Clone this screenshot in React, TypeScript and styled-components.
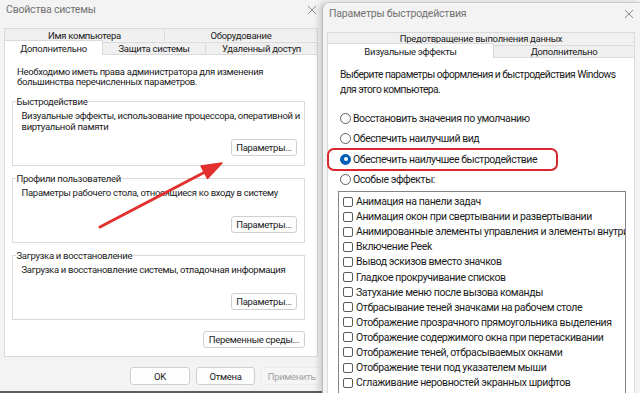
import React from 'react';
import styled, { createGlobalStyle } from 'styled-components';

const GlobalStyle = createGlobalStyle`
  html, body {
    margin: 0;
    padding: 0;
  }
  body {
    width: 640px;
    height: 393px;
    overflow: hidden;
    font-family: Roboto, 'Noto Sans', Arial, sans-serif;
    color: #1b1b1b;
    background: #f3f3f3;
  }
  * {
    box-sizing: border-box;
  }
`;

const Desktop = styled.div`
  position: relative;
  display: flex;
  width: 640px;
  height: 393px;
  overflow: hidden;
  background: #f3f3f3;
`;

const SystemWindow = styled.section`
  display: flex;
  flex-direction: column;
  flex: 0 0 322px;
  height: 393px;
  overflow: hidden;
  background: #f3f3f3;
`;

const PerfWindow = styled.section`
  position: relative;
  z-index: 1;
  display: flex;
  flex-direction: column;
  flex: 1;
  height: 391px;
  margin-top: 2px;
  overflow: hidden;
  background: #f3f3f3;
  border-left: 1px solid #b9b9b9;
  border-top: 1px solid #cdcdcd;
  border-top-left-radius: 7px;
  box-shadow: -3px 0 6px rgba(0, 0, 0, 0.16);
`;

const TitleBar = styled.header<{ $h: number; $pr: number }>`
  display: flex;
  align-items: center;
  justify-content: space-between;
  flex-shrink: 0;
  height: ${(p) => p.$h}px;
  padding: 0 ${(p) => p.$pr}px 8px 6px;
`;

const Title = styled.span`
  font-size: 10.5px;
  letter-spacing: -0.2px;
  line-height: 14px;
  color: #727272;
`;

const TabRow = styled.div<{ $h: number; $mr: number }>`
  display: flex;
  align-items: flex-end;
  flex-shrink: 0;
  height: ${(p) => p.$h}px;
  margin: 0 ${(p) => p.$mr}px 0 4px;
`;

const Tab = styled.div<{ $w?: number; $active?: boolean; $short?: boolean }>`
  position: relative;
  z-index: ${(p) => (p.$active ? 2 : 1)};
  display: flex;
  align-items: center;
  justify-content: center;
  flex: ${(p) => (p.$w ? `0 0 ${p.$w}px` : '1 1 0')};
  height: ${(p) => (p.$active ? 'calc(100% + 2px)' : p.$short ? 'calc(100% - 1px)' : '100%')};
  margin-bottom: ${(p) => (p.$active ? '-1px' : '0')};
  margin-left: -1px;
  border: 1px solid #dadada;
  border-bottom: none;
  background: ${(p) => (p.$active ? '#ffffff' : '#f0f0f0')};
  font-size: 9.5px;
  letter-spacing: -0.3px;
  white-space: nowrap;
  &:first-child {
    margin-left: 0;
  }
`;

const LeftPanel = styled.div`
  display: flex;
  flex-direction: column;
  flex-shrink: 0;
  height: 303px;
  margin: 0 4px;
  padding: 11.5px 12px 0 7px;
  background: #fff;
  border: 1px solid #dadada;
  font-size: 9.5px;
  letter-spacing: -0.3px;
`;

const Intro = styled.p`
  margin: 0;
  padding-left: 5px;
  line-height: 10.5px;
  white-space: pre-line;
`;

const Groups = styled.div`
  display: flex;
  flex-direction: column;
  gap: 7px;
  margin-top: 8px;
`;

const Group = styled.fieldset`
  margin: 0;
  min-width: 0;
  padding: 4.5px 7px 8.5px 8.5px;
  border: 1px solid #dadada;
`;

const Legend = styled.legend`
  margin-left: -6px;
  padding: 0 1px;
  line-height: 11px;
`;

const GroupText = styled.div`
  height: 22px;
  line-height: 10.5px;
  white-space: pre;
`;

const ButtonRow = styled.div<{ $mt: number }>`
  display: flex;
  justify-content: flex-end;
  gap: 6px;
  margin-top: ${(p) => p.$mt}px;
`;

const Button = styled.button<{ $w: number; $h?: number }>`
  width: ${(p) => p.$w}px;
  height: ${(p) => p.$h ?? 17}px;
  padding: 0;
  border: 1px solid #d0d0d0;
  border-radius: 3px;
  background: #fdfdfd;
  font-family: inherit;
  font-size: 9.5px;
  letter-spacing: -0.3px;
  color: #1b1b1b;
  white-space: nowrap;
  &:disabled {
    border-color: #ececec;
    background: #f5f5f5;
    color: #a2a2a2;
  }
`;

const Footer = styled.div`
  display: flex;
  justify-content: flex-end;
  gap: 6px;
  margin-top: 10px;
`;

const BottomEdge = styled.div`
  margin-top: auto;
  height: 2px;
  background: #5d5d5d;
`;

const RightPanel = styled.div`
  display: flex;
  flex-direction: column;
  flex-shrink: 0;
  height: 420px;
  margin: 0 5px 0 4px;
  padding: 10px 8px 0 12px;
  background: #fff;
  border: 1px solid #dadada;
  font-size: 10.5px;
  letter-spacing: -0.45px;
`;

const PanelIntro = styled.p`
  margin: 0;
  font-size: 10.3px;
  letter-spacing: -0.55px;
  line-height: 14.5px;
  white-space: pre;
`;

const RadioGroup = styled.div`
  display: flex;
  flex-direction: column;
  margin-top: 10.75px;
`;

const RadioRow = styled.label`
  position: relative;
  display: flex;
  align-items: center;
  gap: 2px;
  height: 20.5px;
`;

const Radio = styled.span<{ $checked?: boolean }>`
  display: flex;
  align-items: center;
  justify-content: center;
  flex-shrink: 0;
  width: 11px;
  height: 11px;
  border-radius: 50%;
  border: 1px solid ${(p) => (p.$checked ? '#005fb8' : '#5f5f5f')};
  background: ${(p) => (p.$checked ? '#005fb8' : '#ffffff')};
  &::after {
    content: '';
    display: ${(p) => (p.$checked ? 'block' : 'none')};
    width: 4px;
    height: 4px;
    border-radius: 50%;
    background: #fff;
  }
`;

const Highlight = styled.span`
  position: absolute;
  left: -13px;
  top: -1px;
  width: 231px;
  height: 23.5px;
  border: 2.5px solid #d6282e;
  border-radius: 7px;
  pointer-events: none;
`;

const ListBox = styled.div`
  display: flex;
  flex-direction: column;
  height: 240px;
  margin: 1.25px 0 0 -2px;
  padding-top: 2px;
  overflow: hidden;
  border: 1px solid #848484;
  background: #fff;
  letter-spacing: -0.4px;
`;

const ListItem = styled.div`
  display: flex;
  align-items: center;
  gap: 3px;
  flex-shrink: 0;
  height: 15.1px;
  padding-left: 4px;
  white-space: nowrap;
`;

const CheckBox = styled.span`
  flex-shrink: 0;
  width: 10px;
  height: 10px;
  border: 1px solid #5c5c5c;
  border-radius: 2px;
  background: #fff;
`;

const ArrowLayer = styled.svg`
  position: absolute;
  top: 0;
  left: 0;
  z-index: 5;
  pointer-events: none;
`;

function CloseIcon() {
  return (
    <svg width="10" height="10" viewBox="0 0 10 10">
      <path d="M1 1 L9 9 M9 1 L1 9" stroke="#8a8a8a" strokeWidth="1" fill="none" />
    </svg>
  );
}

const effects = [
  'Анимация на панели задач',
  'Анимация окон при свертывании и развертывании',
  'Анимированные элементы управления и элементы внутри окна',
  'Включение Peek',
  'Вывод эскизов вместо значков',
  'Гладкое прокручивание списков',
  'Затухание меню после вызова команды',
  'Отбрасывание теней значками на рабочем столе',
  'Отображение прозрачного прямоугольника выделения',
  'Отображение содержимого окна при перетаскивании',
  'Отображение теней, отбрасываемых окнами',
  'Отображение тени под указателем мыши',
  'Сглаживание неровностей экранных шрифтов',
  'Сохранение вида эскизов панели задач',
];

const radios = [
  'Восстановить значения по умолчанию',
  'Обеспечить наилучший вид',
  'Обеспечить наилучшее быстродействие',
  'Особые эффекты:',
];

const groups = [
  {
    title: 'Быстродействие',
    text: 'Визуальные эффекты, использование процессора, оперативной и\nвиртуальной памяти',
  },
  {
    title: 'Профили пользователей',
    text: 'Параметры рабочего стола, относящиеся ко входу в систему',
  },
  {
    title: 'Загрузка и восстановление',
    text: 'Загрузка и восстановление системы, отладочная информация',
  },
];

export default function App() {
  return (
    <Desktop>
      <GlobalStyle />
      <SystemWindow>
        <TitleBar $h={28} $pr={5}>
          <Title>Свойства системы</Title>
          <CloseIcon />
        </TitleBar>
        <TabRow $h={13} $mr={4}>
          <Tab $w={161}>Имя компьютера</Tab>
          <Tab>Оборудование</Tab>
        </TabRow>
        <TabRow $h={13} $mr={4}>
          <Tab $w={99} $active>
            Дополнительно
          </Tab>
          <Tab $w={104} $short>
            Защита системы
          </Tab>
          <Tab $short>Удаленный доступ</Tab>
        </TabRow>
        <LeftPanel>
          <Intro>{'Необходимо иметь права администратора для изменения\nбольшинства перечисленных параметров.'}</Intro>
          <Groups>
            {groups.map((g) => (
              <Group key={g.title}>
                <Legend>{g.title}</Legend>
                <GroupText>{g.text}</GroupText>
                <ButtonRow $mt={6}>
                  <Button $w={66}>Параметры...</Button>
                </ButtonRow>
              </Group>
            ))}
          </Groups>
          <ButtonRow $mt={11}>
            <Button $w={102}>Переменные среды...</Button>
          </ButtonRow>
        </LeftPanel>
        <Footer>
          <Button $w={60} $h={18}>
            OK
          </Button>
          <Button $w={59} $h={18}>
            Отмена
          </Button>
          <Button $w={61} $h={18} disabled>
            Применить
          </Button>
        </Footer>
        <BottomEdge />
      </SystemWindow>

      <PerfWindow>
        <TitleBar $h={29} $pr={6}>
          <Title>Параметры быстродействия</Title>
          <CloseIcon />
        </TitleBar>
        <TabRow $h={12} $mr={5}>
          <Tab>Предотвращение выполнения данных</Tab>
        </TabRow>
        <TabRow $h={13} $mr={5}>
          <Tab $w={167} $active>
            Визуальные эффекты
          </Tab>
          <Tab $short>Дополнительно</Tab>
        </TabRow>
        <RightPanel>
          <PanelIntro>{'Выберите параметры оформления и быстродействия Windows\nдля этого компьютера.'}</PanelIntro>
          <RadioGroup>
            {radios.map((r, i) => (
              <RadioRow key={r}>
                <Radio $checked={i === 2} />
                {r}
                {i === 2 && <Highlight />}
              </RadioRow>
            ))}
          </RadioGroup>
          <ListBox>
            {effects.map((e) => (
              <ListItem key={e}>
                <CheckBox />
                {e}
              </ListItem>
            ))}
          </ListBox>
        </RightPanel>
      </PerfWindow>

      <ArrowLayer width="640" height="393" viewBox="0 0 640 393">
        <line x1="100" y1="227" x2="205" y2="172" stroke="#e2302f" strokeWidth="3" strokeLinecap="round" />
        <polygon points="222,163 207.5,178.5 201.1,166.1" fill="#e2302f" stroke="#e2302f" strokeWidth="1.5" strokeLinejoin="round" />
      </ArrowLayer>
    </Desktop>
  );
}
